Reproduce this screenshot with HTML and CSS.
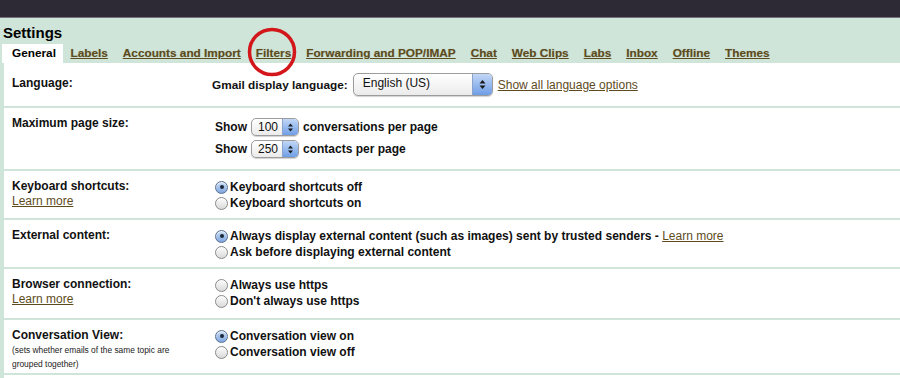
FILE: index.html
```html
<!DOCTYPE html>
<html lang="en">
<head>
  <meta charset="UTF-8">
  <title>Settings</title>
  <link rel="stylesheet" href="styles.css">
</head>
<body>

<div class="topbar"></div>

<div class="settings">
  <h1>Settings</h1>

  <div class="tabs">
    <span class="tab active">General</span>
    <a href="#" class="tab">Labels</a>
    <a href="#" class="tab">Accounts and Import</a>
    <a href="#" class="tab">Filters</a>
    <a href="#" class="tab">Forwarding and POP/IMAP</a>
    <a href="#" class="tab">Chat</a>
    <a href="#" class="tab">Web Clips</a>
    <a href="#" class="tab">Labs</a>
    <a href="#" class="tab">Inbox</a>
    <a href="#" class="tab">Offline</a>
    <a href="#" class="tab">Themes</a>
  </div>

  <svg class="mark" width="52" height="52" viewBox="0 0 52 52">
    <circle cx="26" cy="26" r="22.5" fill="none" stroke="#d3161a" stroke-width="3.5"/>
  </svg>

  <div class="panel">

    <div class="row row-lang">
      <div class="label">Language:</div>
      <div class="controls line-lang">
        <span>Gmail display language:</span>
        <span class="select select-lang">
          <span class="select-text">English (US)</span>
          <span class="select-arrows"><svg width="7" height="11" viewBox="0 0 7 11"><path d="M3.5 1 L6.5 4.6 H0.5Z M3.5 10 L6.5 6.4 H0.5Z" fill="#1a1a1a"/></svg></span>
        </span>
        <a href="#" class="link">Show all language options</a>
      </div>
    </div>

    <div class="row row-size">
      <div class="label">Maximum page size:</div>
      <div class="controls">
        <div class="line-show">
          <span>Show</span>
          <span class="select select-small">
            <span class="select-text">100</span>
            <span class="select-arrows"><svg width="7" height="11" viewBox="0 0 7 11"><path d="M3.5 1.5 L6 4.6 H1Z M3.5 9.5 L6 6.4 H1Z" fill="#1a1a1a"/></svg></span>
          </span>
          <span>conversations per page</span>
        </div>
        <div class="line-show">
          <span>Show</span>
          <span class="select select-small">
            <span class="select-text">250</span>
            <span class="select-arrows"><svg width="7" height="11" viewBox="0 0 7 11"><path d="M3.5 1.5 L6 4.6 H1Z M3.5 9.5 L6 6.4 H1Z" fill="#1a1a1a"/></svg></span>
          </span>
          <span>contacts per page</span>
        </div>
      </div>
    </div>

    <div class="row">
      <div class="label">Keyboard shortcuts:<a href="#" class="link learn">Learn more</a></div>
      <div class="controls">
        <label class="radio"><span class="dot checked"></span>Keyboard shortcuts off</label>
        <label class="radio"><span class="dot"></span>Keyboard shortcuts on</label>
      </div>
    </div>

    <div class="row">
      <div class="label">External content:</div>
      <div class="controls">
        <label class="radio"><span class="dot checked"></span>Always display external content (such as images) sent by trusted senders -&nbsp;<a href="#" class="link plain">Learn more</a></label>
        <label class="radio"><span class="dot"></span>Ask before displaying external content</label>
      </div>
    </div>

    <div class="row row-https">
      <div class="label">Browser connection:<a href="#" class="link learn">Learn more</a></div>
      <div class="controls">
        <label class="radio"><span class="dot"></span>Always use https</label>
        <label class="radio"><span class="dot"></span>Don't always use https</label>
      </div>
    </div>

    <div class="row row-conv">
      <div class="label">Conversation View:<span class="note">(sets whether emails of the same topic are grouped together)</span></div>
      <div class="controls">
        <label class="radio"><span class="dot checked"></span>Conversation view on</label>
        <label class="radio"><span class="dot"></span>Conversation view off</label>
      </div>
    </div>

  </div>
</div>

</body>
</html>
```

FILE: styles.css
```css
body { margin: 0; font-family: "Liberation Sans", Arial, sans-serif; font-size: 12px; color: #111; background: #cfe5da; overflow: hidden; }
a { color: #5e4b1d; }

.topbar { height: 17px; background: #2e2a35; border-bottom: 1px solid #77737c; }

.settings { position: relative; padding-top: 1px; }
h1 { margin: 5px 0 2px 3px; font-size: 15px; line-height: 18px; color: #000; }

.tabs { display: flex; padding-left: 2px; height: 19px; }
.tab { padding: 0 7.5px; font-size: 11.8px; line-height: 19px; font-weight: bold; color: #5e4b1d; text-decoration: underline; text-shadow: 0 0 1px rgba(94,75,29,0.35); }
.tab.active { background: #fff; color: #000; text-decoration: none; text-shadow: none; padding: 0 7px 0 10px; }

.mark { position: absolute; left: 246px; top: 8px; }

.panel { margin-left: 4px; background: #fff; padding-bottom: 10px; }

.row { display: flex; padding: 8px 0 7px 8px; border-bottom: 2px solid #cfe5da; }
.label { width: 202px; flex: none; font-weight: bold; line-height: 15px; color: #111; }
.controls { font-weight: bold; color: #111; }

.link { font-weight: normal; text-decoration: underline; }
.learn { display: block; line-height: 14px; }

.row-lang { padding: 10px 0 10px 8px; }
.row-lang .label { margin-top: 3px; }
.line-lang { display: flex; align-items: center; gap: 5px; margin-left: -2px; }
.line-lang > span:first-child { font-size: 11.8px; }

.row-size { padding: 7px 0 9px 8px; }
.row-size .label { margin-top: 1px; }
.row-size .controls { margin-top: 1px; padding-left: 1px; }
.line-show { display: flex; align-items: center; gap: 4px; height: 22px; }

.row-https { padding-bottom: 9px; }
.row-conv { padding-bottom: 2px; }
.note { display: block; width: 170px; font-size: 8.4px; line-height: 14px; font-weight: normal; color: #222; }

.radio { display: flex; align-items: center; line-height: 16px; padding-left: 1px; }
.dot { width: 11px; height: 11px; border: 1px solid #8a8a8a; border-radius: 50%; margin-right: 2px; background: linear-gradient(#fdfdfd, #d9d9d9); box-shadow: inset 0 1px 1px rgba(255,255,255,0.8); display: flex; align-items: center; justify-content: center; }
.dot.checked { border-color: #5a6f8e; background: linear-gradient(#c9dcf5, #7fa6e0); }
.dot.checked::after { content: ""; width: 4px; height: 4px; border-radius: 50%; background: #1c2738; }

.select { display: inline-flex; box-sizing: border-box; border: 1px solid #9c9c9c; border-radius: 5px; background: linear-gradient(#ffffff, #ebebeb); box-shadow: 0 1px 1px rgba(0,0,0,0.18); overflow: hidden; font-weight: normal; color: #111; }
.select-text { flex: 1; }
.select-arrows { display: flex; align-items: center; justify-content: center; background: linear-gradient(#c2d7f6, #6f9ee6); border-left: 1px solid #8aa3cc; }
.select-lang { width: 140px; height: 23px; }
.select-lang .select-text { padding-left: 9px; line-height: 19px; }
.select-lang .select-arrows { width: 19px; }
.select-small { width: 48px; height: 18px; }
.select-small .select-text { text-align: center; line-height: 16px; padding-left: 2px; }
.select-small .select-arrows { width: 15px; }
```
